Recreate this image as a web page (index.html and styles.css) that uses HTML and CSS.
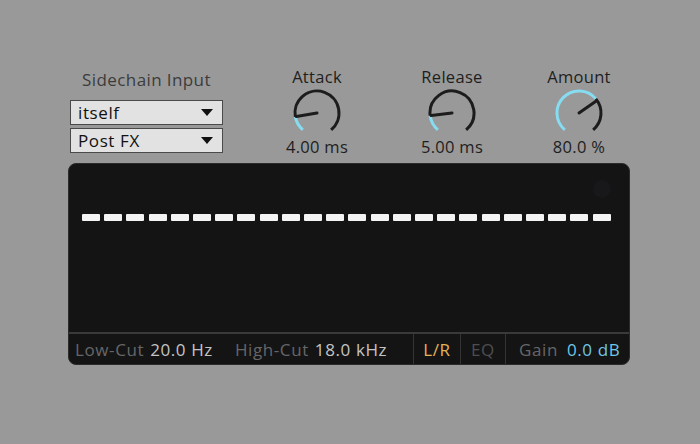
FILE: index.html
```html
<!DOCTYPE html>
<html>
<head>
<meta charset="utf-8">
<link rel="stylesheet" href="styles.css">
</head>
<body>
<div class="device">
  <div class="controls">
    <div class="sidechain">
      <div class="sc-label">Sidechain Input</div>
      <div class="dropdown"><span>itself</span><span class="arrow"></span></div>
      <div class="dropdown"><span>Post FX</span><span class="arrow"></span></div>
    </div>
    <div class="knob knob-attack">
      <div class="knob-label">Attack</div>
      <svg class="knob-svg" width="60" height="50" viewBox="0 0 60 50">
        <path d="M15.86 41.85 A22 22 0 0 1 8.33 28.82" class="arc-on"/>
        <path d="M8.33 28.82 A22 22 0 1 1 44.14 41.85" class="arc-off"/>
        <line x1="30" y1="25" x2="9.3" y2="28.6" class="needle"/>
      </svg>
      <div class="knob-value">4.00 ms</div>
    </div>
    <div class="knob knob-release">
      <div class="knob-label">Release</div>
      <svg class="knob-svg" width="60" height="50" viewBox="0 0 60 50">
        <path d="M15.86 41.85 A22 22 0 0 1 8.16 27.68" class="arc-on"/>
        <path d="M8.16 27.68 A22 22 0 1 1 44.14 41.85" class="arc-off"/>
        <line x1="30" y1="25" x2="9.1" y2="27.5" class="needle"/>
      </svg>
      <div class="knob-value">5.00 ms</div>
    </div>
    <div class="knob knob-amount">
      <div class="knob-label">Amount</div>
      <svg class="knob-svg" width="60" height="50" viewBox="0 0 60 50">
        <path d="M15.86 41.85 A22 22 0 1 1 46.85 10.86" class="arc-on"/>
        <path d="M46.85 10.86 A22 22 0 0 1 44.14 41.85" class="arc-off"/>
        <line x1="30" y1="25" x2="47.6" y2="12.7" class="needle"/>
      </svg>
      <div class="knob-value">80.0 %</div>
    </div>
  </div>
  <div class="panel">
    <div class="graph">
      <div class="dot"></div>
      <div class="dashes">
        <i></i><i></i><i></i><i></i><i></i><i></i><i></i><i></i>
        <i></i><i></i><i></i><i></i><i></i><i></i><i></i><i></i>
        <i></i><i></i><i></i><i></i><i></i><i></i><i></i><i></i>
      </div>
    </div>
    <div class="bar">
      <div class="seg seg-filter">
        <span class="dim">Low-Cut</span><span class="val">20.0 Hz</span>
        <span class="dim hc">High-Cut</span><span class="val">18.0 kHz</span>
      </div>
      <div class="seg seg-lr"><span class="lr">L/R</span></div>
      <div class="seg seg-eq"><span class="eq">EQ</span></div>
      <div class="seg seg-gain"><span class="dim">Gain</span><span class="gain">0.0 dB</span></div>
    </div>
  </div>
</div>
</body>
</html>
```

FILE: styles.css
```css
* { box-sizing: border-box; }
html, body { margin: 0; padding: 0; }
body {
  width: 700px;
  height: 444px;
  background: #999999;
  font-family: "Open Sans", "DejaVu Sans", sans-serif;
  overflow: hidden;
}
.device {
  display: flex;
  flex-direction: column;
  padding-left: 68px;
}
.controls {
  display: flex;
  align-items: flex-start;
  padding-top: 68px;
  height: 163px;
}
.sidechain {
  margin-left: 2px;
  margin-top: 3px;
  width: 153px;
  display: flex;
  flex-direction: column;
  gap: 3px;
}
.sc-label {
  font-size: 17px;
  line-height: 18px;
  color: #3c3c3c;
  text-align: center;
  margin-bottom: 8px;
  letter-spacing: 0.4px;
}
.dropdown {
  height: 25px;
  border: 1px solid #4a4a4a;
  background: #e2e2e2;
  display: flex;
  align-items: center;
  justify-content: space-between;
  padding: 0 9px 0 7px;
  font-size: 17px;
  color: #111;
  letter-spacing: 0.6px;
}
.arrow {
  width: 0;
  height: 0;
  border-left: 6px solid transparent;
  border-right: 6px solid transparent;
  border-top: 7px solid #111;
}
.knob {
  width: 80px;
  display: flex;
  flex-direction: column;
  align-items: center;
}
.knob-attack { margin-left: 54px; }
.knob-release { margin-left: 55px; }
.knob-amount { margin-left: 47px; }
.knob-label, .knob-value {
  font-size: 16.5px;
  line-height: 18px;
  color: #1e1e1e;
  white-space: nowrap;
  letter-spacing: 0.3px;
}
.knob-svg { display: block; margin-top: 2px; }
.arc-on { fill: none; stroke: #86dcf0; stroke-width: 3; }
.arc-off { fill: none; stroke: #1c1c1c; stroke-width: 3; }
.needle { stroke: #1c1c1c; stroke-width: 3; stroke-linecap: round; }

.panel {
  width: 562px;
  height: 202px;
  background: #141415;
  border-radius: 8px;
  border: 1px solid #2b2b2b;
  display: flex;
  flex-direction: column;
  overflow: hidden;
}
.graph {
  position: relative;
  flex: 1;
  padding-top: 50px;
  padding-left: 13px;
}
.dot {
  position: absolute;
  right: 18px;
  top: 16px;
  width: 18px;
  height: 18px;
  border-radius: 50%;
  background: #18181a;
}
.dashes {
  width: 529px;
  display: flex;
  justify-content: space-between;
}
.dashes i {
  display: block;
  width: 18px;
  height: 7px;
  background: #f4f4f4;
  border-radius: 1px;
}
.bar {
  height: 32px;
  border-top: 2px solid #3a3a3b;
  display: flex;
  font-size: 17px;
  letter-spacing: 0.6px;
}
.seg {
  display: flex;
  align-items: center;
  white-space: nowrap;
}
.seg-filter { width: 344px; padding-left: 6px; }
.seg-lr { width: 47px; justify-content: center; border-left: 1px solid #343435; }
.seg-eq { width: 45px; justify-content: center; border-left: 1px solid #343435; }
.seg-gain { flex: 1; padding-left: 13px; border-left: 1px solid #343435; }
.dim { color: #666668; }
.val { color: #c4c4c4; margin-left: 6px; }
.hc { margin-left: 22px; }
.lr { color: #e2b354; }
.eq { color: #4e4e50; }
.gain { color: #6fc6e6; margin-left: 9px; }
```
